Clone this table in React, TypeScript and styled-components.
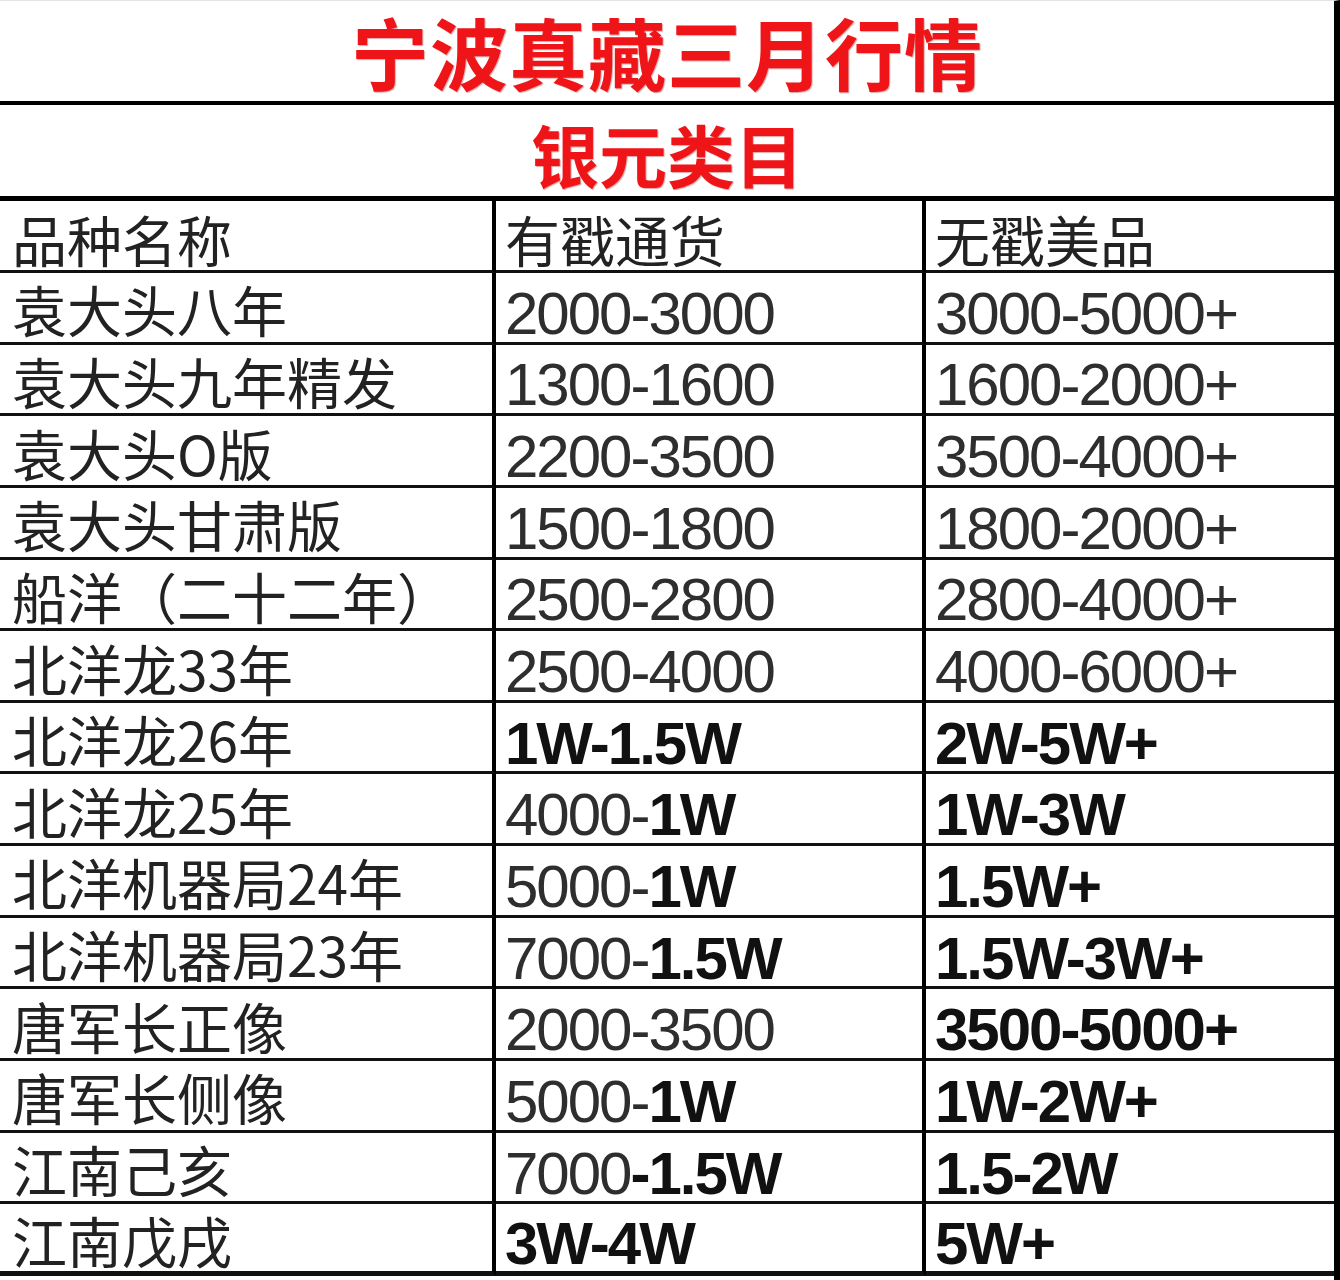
import React from "react";
import styled, { createGlobalStyle } from "styled-components";

const Global = createGlobalStyle`
  html, body { margin: 0; padding: 0; background: #fff; }
  body { font-family: "Liberation Sans", "Noto Sans CJK SC", sans-serif; }
`;

const Sheet = styled.div`
  width: 1340px;
  height: 1280px;
  box-sizing: border-box;
  border-right: 6px solid #000;
  border-top: 1px solid #e4e4e4;
  background: #fff;
  display: flex;
  flex-direction: column;
`;

const Banner = styled.div<{ $h: number; $size: number; $line: number; $pad: number }>`
  height: ${(p) => p.$h}px;
  box-sizing: border-box;
  border-bottom: ${(p) => p.$line}px solid #000;
  display: flex;
  justify-content: center;
  align-items: center;
  padding-top: ${(p) => p.$pad}px;
  font-family: "Noto Sans CJK SC", sans-serif;
  font-weight: 700;
  font-size: ${(p) => p.$size}px;
  line-height: 1;
  color: #ee1418;
  text-shadow: 1px 1px 1px rgba(150, 0, 0, 0.35);
  letter-spacing: ${(p) => (p.$size > 70 ? 1 : 0)}px;
`;

const Grid = styled.div`
  display: grid;
  grid-template-columns: 496px 430px 1fr;
  grid-template-rows: 72px;
  grid-auto-rows: 71.643px;
`;

const Cell = styled.div<{ $col: number; $last: boolean; $head: boolean }>`
  box-sizing: border-box;
  border-right: ${(p) => (p.$col < 2 ? "4px solid #000" : "none")};
  border-bottom: ${(p) => (p.$last ? 5 : 3)}px solid #111;
  display: flex;
  align-items: ${(p) => (p.$head ? "flex-end" : "center")};
  padding: ${(p) => (p.$head ? "0 0 4px" : "3px 0 0")}
    ${(p) => (p.$col === 0 ? 12 : 9)}px;
  color: #1c1c1c;
  white-space: nowrap;
`;

const Name = styled.span`
  font-family: "Noto Sans CJK SC", sans-serif;
  font-size: 55px;
  line-height: 1;
  font-weight: 400;
  color: #222;
`;

const Num = styled.span<{ $bold: boolean }>`
  font-family: "Liberation Sans", "Noto Sans CJK SC", sans-serif;
  font-size: 60px;
  line-height: 54px;
  padding-top: 10px;
  letter-spacing: -2px;
  font-weight: ${(p) => (p.$bold ? 700 : 400)};
  color: ${(p) => (p.$bold ? "#111" : "#2e2e2e")};
`;

type Part = [string, boolean];
type Row = { name: string; a: Part[]; b: Part[] };

const rows: Row[] = [
  { name: "袁大头八年", a: [["2000-3000", false]], b: [["3000-5000+", false]] },
  { name: "袁大头九年精发", a: [["1300-1600", false]], b: [["1600-2000+", false]] },
  { name: "袁大头O版", a: [["2200-3500", false]], b: [["3500-4000+", false]] },
  { name: "袁大头甘肃版", a: [["1500-1800", false]], b: [["1800-2000+", false]] },
  { name: "船洋（二十二年）", a: [["2500-2800", false]], b: [["2800-4000+", false]] },
  { name: "北洋龙33年", a: [["2500-4000", false]], b: [["4000-6000+", false]] },
  { name: "北洋龙26年", a: [["1W-1.5W", true]], b: [["2W-5W+", true]] },
  { name: "北洋龙25年", a: [["4000-", false], ["1W", true]], b: [["1W-3W", true]] },
  { name: "北洋机器局24年", a: [["5000-", false], ["1W", true]], b: [["1.5W+", true]] },
  { name: "北洋机器局23年", a: [["7000-", false], ["1.5W", true]], b: [["1.5W-3W+", true]] },
  { name: "唐军长正像", a: [["2000-3500", false]], b: [["3500-5000+", true]] },
  { name: "唐军长侧像", a: [["5000-", false], ["1W", true]], b: [["1W-2W+", true]] },
  { name: "江南己亥", a: [["7000", false], ["-1.5W", true]], b: [["1.5-2W", true]] },
  { name: "江南戊戌", a: [["3W-4W", true]], b: [["5W+", true]] },
];

const Value = ({ parts }: { parts: Part[] }) => (
  <>
    {parts.map(([t, b], i) => (
      <Num key={i} $bold={b}>
        {t}
      </Num>
    ))}
  </>
);

export default function App() {
  return (
    <>
      <Global />
      <Sheet>
        <Banner $h={104} $size={78} $line={4} $pad={0}>
          宁波真藏三月行情
        </Banner>
        <Banner $h={96} $size={68} $line={5} $pad={6}>
          银元类目
        </Banner>
        <Grid>
          <Cell $col={0} $last={false} $head>
            <Name>品种名称</Name>
          </Cell>
          <Cell $col={1} $last={false} $head>
            <Name>有戳通货</Name>
          </Cell>
          <Cell $col={2} $last={false} $head>
            <Name>无戳美品</Name>
          </Cell>
          {rows.map((r, i) => {
            const last = i === rows.length - 1;
            return (
              <React.Fragment key={r.name}>
                <Cell $col={0} $last={last} $head={false}>
                  <Name>{r.name}</Name>
                </Cell>
                <Cell $col={1} $last={last} $head={false}>
                  <Value parts={r.a} />
                </Cell>
                <Cell $col={2} $last={last} $head={false}>
                  <Value parts={r.b} />
                </Cell>
              </React.Fragment>
            );
          })}
        </Grid>
      </Sheet>
    </>
  );
}
